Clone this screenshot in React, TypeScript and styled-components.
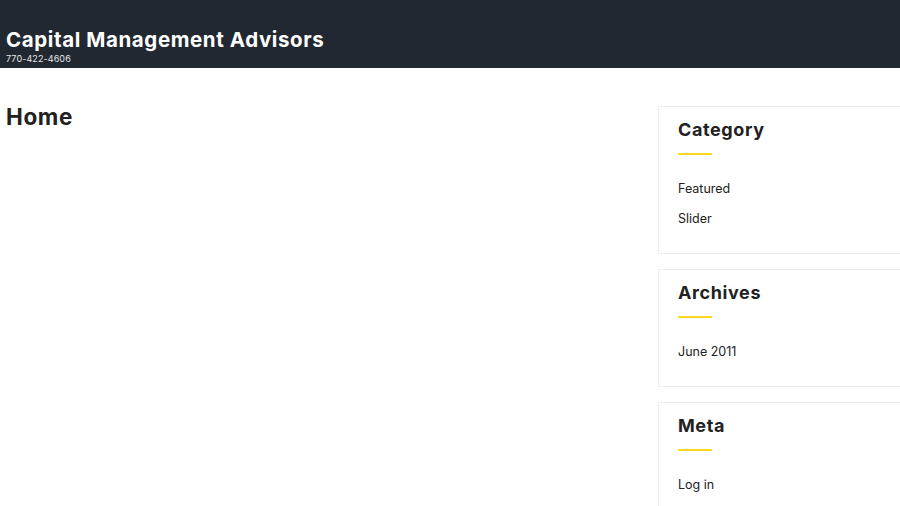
import React from 'react';
import styled, { createGlobalStyle } from 'styled-components';

const GlobalStyle = createGlobalStyle`
  html, body {
    margin: 0;
    padding: 0;
    background: #ffffff;
    overflow: hidden;
  }
  body {
    font-family: 'Inter', 'Open Sans', sans-serif;
    color: #222222;
  }
`;

const Header = styled.header`
  height: 68px;
  background-color: #222831;
  display: flex;
  flex-direction: column;
  justify-content: flex-end;
  padding: 0 6px 3px;
  box-sizing: border-box;
`;

const SiteTitle = styled.h1`
  margin: 0 0 1px;
  font-size: 20.5px;
  line-height: 24px;
  font-weight: 700;
  color: #ffffff;
  letter-spacing: 0.6px;
`;

const Phone = styled.span`
  font-size: 9px;
  line-height: 12px;
  color: #e6e6e6;
  letter-spacing: 0.1px;
`;

const Main = styled.div`
  display: flex;
  flex-direction: row;
  padding: 38px 0 0 6px;
`;

const Content = styled.div`
  flex: 1;
`;

const PageTitle = styled.h2`
  margin: -3px 0 0;
  font-size: 22.5px;
  line-height: 28px;
  font-weight: 700;
  color: #222222;
  letter-spacing: 0.6px;
`;

const Sidebar = styled.aside`
  width: 300px;
  flex-shrink: 0;
  display: flex;
  flex-direction: column;
  gap: 15px;
  margin-right: -58px;
`;

const Widget = styled.section`
  border: 1px solid #efefef;
  padding: 11px 19px 26px;
`;

const WidgetTitle = styled.h3`
  margin: 0;
  font-size: 18px;
  line-height: 24px;
  font-weight: 700;
  color: #222222;
  letter-spacing: 0.6px;
`;

const Underline = styled.div`
  width: 34px;
  height: 2px;
  background-color: #ffd81f;
  margin: 11px 0 26px;
`;

const WidgetList = styled.ul`
  list-style: none;
  margin: 0;
  padding: 0;
  display: flex;
  flex-direction: column;
  gap: 14px;
`;

const WidgetItem = styled.li`
  font-size: 12.5px;
  line-height: 16px;
  color: #222222;
`;

const widgets = [
  { title: 'Category', items: ['Featured', 'Slider'] },
  { title: 'Archives', items: ['June 2011'] },
  { title: 'Meta', items: ['Log in'] }
];

export default function App(): JSX.Element {
  return (
    <>
      <GlobalStyle />
      <Header>
        <SiteTitle>Capital Management Advisors</SiteTitle>
        <Phone>770-422-4606</Phone>
      </Header>
      <Main>
        <Content>
          <PageTitle>Home</PageTitle>
        </Content>
        <Sidebar>
          {widgets.map((w) => (
            <Widget key={w.title}>
              <WidgetTitle>{w.title}</WidgetTitle>
              <Underline />
              <WidgetList>
                {w.items.map((item) => (
                  <WidgetItem key={item}>{item}</WidgetItem>
                ))}
              </WidgetList>
            </Widget>
          ))}
        </Sidebar>
      </Main>
    </>
  );
}
